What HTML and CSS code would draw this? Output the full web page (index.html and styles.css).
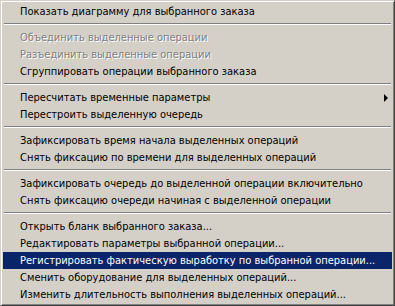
FILE: index.html
```html
<!doctype html>
<html lang="ru">
 <head>
  <meta charset="UTF-8">
  <title>Меню</title>
  <link rel="stylesheet" href="styles.css">
 </head>
 <body>
  <div class="menu">
   <div class="item">Показать диаграмму для выбранного заказа</div>
   <div class="sep"></div>
   <div class="item disabled">Объединить выделенные операции</div>
   <div class="item disabled">Разъединить выделенные операции</div>
   <div class="item">Сгруппировать операции выбранного заказа</div>
   <div class="sep"></div>
   <div class="item sub">Пересчитать временные параметры<span class="arrow"></span></div>
   <div class="item">Перестроить выделенную очередь</div>
   <div class="sep"></div>
   <div class="item">Зафиксировать время начала выделенных операций</div>
   <div class="item">Снять фиксацию по времени для выделенных операций</div>
   <div class="sep"></div>
   <div class="item">Зафиксировать очередь до выделенной операции включительно</div>
   <div class="item">Снять фиксацию очереди начиная с выделенной операции</div>
   <div class="sep"></div>
   <div class="item">Открыть бланк выбранного заказа...</div>
   <div class="item">Редактировать параметры выбранной операции...</div>
   <div class="item active">Регистрировать фактическую выработку по выбранной операции...</div>
   <div class="item">Сменить оборудование для выделенных операций...</div>
   <div class="item">Изменить длительность выполнения выделенных операций...</div>
  </div>
 </body>
</html>
```

FILE: styles.css
```css
body {
  margin: 0;
  background: #d4d0c8;
}
.menu {
  box-sizing: border-box;
  width: 395px;
  height: 306px;
  padding: 2px;
  background: #d4d0c8;
  border: 1px solid;
  border-color: #d4d0c8 #404040 #404040 #d4d0c8;
  box-shadow: inset 1px 1px 0 #fff, inset -1px -1px 0 #808080;
  font-family: "DejaVu Sans Condensed", "DejaVu Sans", sans-serif;
  font-size: 11px;
  color: #000;
}
.item {
  box-sizing: border-box;
  display: flex;
  align-items: center;
  height: 17px;
  padding: 0 4px 0 17px;
  white-space: nowrap;
}
.item.disabled {
  color: #808080;
  text-shadow: 1px 1px 0 #fff;
}
.item.active {
  background: #0a246a;
  color: #fff;
}
.arrow {
  margin-left: auto;
  width: 0;
  height: 0;
  border-top: 4px solid transparent;
  border-bottom: 4px solid transparent;
  border-left: 4px solid #000;
}
.sep {
  box-sizing: border-box;
  height: 9px;
  padding-top: 3px;
  margin: 0 1px;
}
.sep::after {
  content: "";
  display: block;
  border-top: 1px solid #808080;
  border-bottom: 1px solid #fff;
}
```
